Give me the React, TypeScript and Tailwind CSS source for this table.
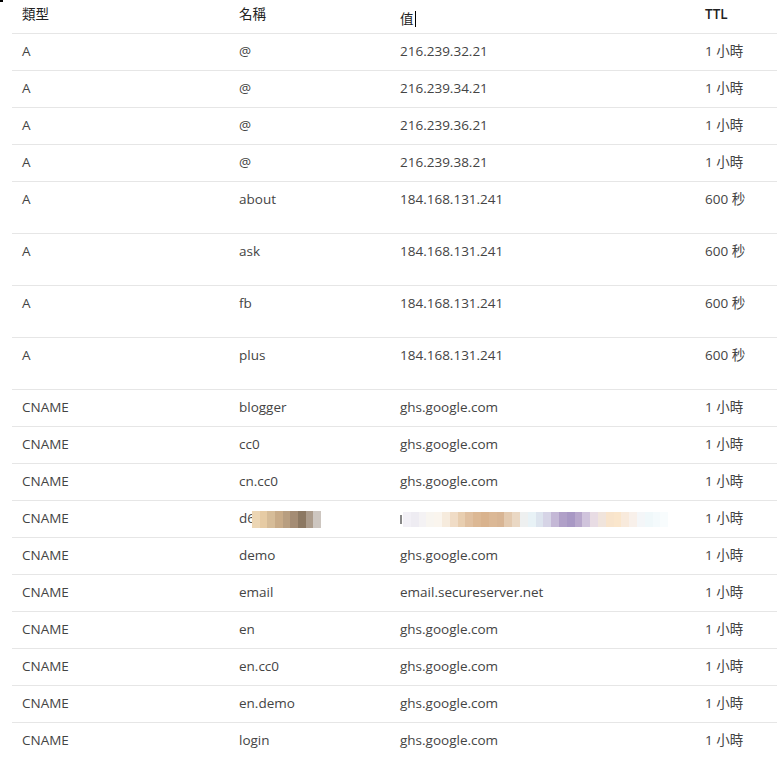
import React from "react";

type Row = { type: string; name: string; value: string; ttl: string; tall?: boolean; blur?: boolean };

const rows: Row[] = [
  { type: "A", name: "@", value: "216.239.32.21", ttl: "1 小時" },
  { type: "A", name: "@", value: "216.239.34.21", ttl: "1 小時" },
  { type: "A", name: "@", value: "216.239.36.21", ttl: "1 小時" },
  { type: "A", name: "@", value: "216.239.38.21", ttl: "1 小時" },
  { type: "A", name: "about", value: "184.168.131.241", ttl: "600 秒", tall: true },
  { type: "A", name: "ask", value: "184.168.131.241", ttl: "600 秒", tall: true },
  { type: "A", name: "fb", value: "184.168.131.241", ttl: "600 秒", tall: true },
  { type: "A", name: "plus", value: "184.168.131.241", ttl: "600 秒", tall: true },
  { type: "CNAME", name: "blogger", value: "ghs.google.com", ttl: "1 小時" },
  { type: "CNAME", name: "cc0", value: "ghs.google.com", ttl: "1 小時" },
  { type: "CNAME", name: "cn.cc0", value: "ghs.google.com", ttl: "1 小時" },
  { type: "CNAME", name: "d6", value: "", ttl: "1 小時", blur: true },
  { type: "CNAME", name: "demo", value: "ghs.google.com", ttl: "1 小時" },
  { type: "CNAME", name: "email", value: "email.secureserver.net", ttl: "1 小時" },
  { type: "CNAME", name: "en", value: "ghs.google.com", ttl: "1 小時" },
  { type: "CNAME", name: "en.cc0", value: "ghs.google.com", ttl: "1 小時" },
  { type: "CNAME", name: "en.demo", value: "ghs.google.com", ttl: "1 小時" },
  { type: "CNAME", name: "login", value: "ghs.google.com", ttl: "1 小時" },
];

const nameBlur = ["#ecd6b4", "#e6cba4", "#d6bc98", "#c8ab88", "#b89e80", "#a48c74", "#8c7862", "#ac9c8c", "#cdc6c0"];

const valueBlur = [
  "#f2f0f6", "#eeecf2", "#f4f2f4", "#f8f5f0", "#faf5ee", "#f6ebdd", "#f0dcc6",
  "#e8ceb0", "#e0c0a0", "#dcb894", "#d9b38e", "#dbb896", "#d8b594", "#e3cab0",
  "#ead8c4", "#eef0f0", "#e8f2f6", "#dde4ee", "#d6d4e6", "#c4b8d6", "#b0a0c8",
  "#a898c4", "#b8a8cc", "#d0c4dc", "#e8dce4", "#f0e4dc", "#f8e4cc", "#fae6cc",
  "#f8eadc", "#f8f0ea", "#f4f6f8", "#f0f8fa", "#f4fafc", "#f8fcfd",
];

const font = { fontFamily: '"Open Sans", "Noto Sans CJK TC", sans-serif' };

export default function App() {
  return (
    <div className="relative w-[777px] h-[757px] overflow-hidden bg-white text-[13.5px] leading-[20px] text-[#444]" style={font}>
      <div className="absolute left-0 top-0 w-[3px] h-[2px] bg-black" />
      <div className="pl-[12px]">
        <div className="grid grid-cols-[217px_161px_305px_1fr] h-[34px] border-b border-[#e6e6e6] pt-[4px] text-[#222]">
          <div className="pl-[10px]">類型</div>
          <div className="pl-[10px]">名稱</div>
          <div className="pl-[10px] flex items-center">
            <span>值</span>
            <span className="ml-[1px] w-px h-[16px] bg-black" />
          </div>
          <div className="pl-[10px] font-semibold">TTL</div>
        </div>
        {rows.map((r, i) => (
          <div
            key={i}
            className={`grid grid-cols-[217px_161px_305px_1fr] border-b border-[#e6e6e6] pt-[7px] ${r.tall ? "h-[52px]" : "h-[37px]"}`}
          >
            <div className="pl-[10px]">{r.type}</div>
            <div className="pl-[10px] flex items-start">
              <span>{r.name}</span>
              {r.blur && (
                <span className="flex mt-[3px] -ml-[3px] h-[17px]">
                  {nameBlur.map((c, j) => (
                    <span key={j} className="w-[7.7px] h-full" style={{ backgroundColor: c }} />
                  ))}
                </span>
              )}
            </div>
            <div className="pl-[10px] flex items-start">
              {r.blur ? (
                <>
                  <span className="mt-[7px] w-[2px] h-[9px] bg-[#888]" />
                  <span className="flex mt-[4px] ml-[1px] h-[15px]">
                    {valueBlur.map((c, j) => (
                      <span key={j} className="w-[7.8px] h-full" style={{ backgroundColor: c }} />
                    ))}
                  </span>
                </>
              ) : (
                <span>{r.value}</span>
              )}
            </div>
            <div className="pl-[10px]">{r.ttl}</div>
          </div>
        ))}
      </div>
    </div>
  );
}
